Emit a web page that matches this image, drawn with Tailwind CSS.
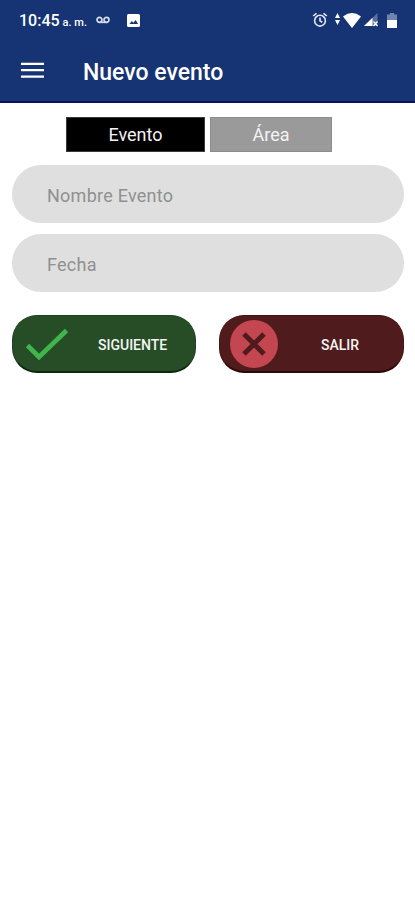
<!DOCTYPE html>
<html lang="es">

    <head>
        <meta charset="UTF-8">
        <meta name="viewport" content="width=device-width, initial-scale=1.0">
        <title>Nuevo evento</title>
        <script src="https://cdn.jsdelivr.net/npm/@tailwindcss/browser@4"></script>
    </head>

    <body class="min-h-screen bg-white font-[Roboto,sans-serif]">
        <header class="h-[103px] bg-[#163374] border-b-2 border-[#0b1160] text-white">
            <!-- Status bar -->
            <div class="flex h-10 items-center justify-between pl-[19px] pr-[18px]">
                <div class="flex items-center">
                    <span class="pt-[2px] text-[16px] font-medium leading-5">10:45</span>
                    <span class="ml-[3px] pt-[5px] text-[11px] font-medium leading-4 whitespace-nowrap">a. m.</span>
                    <svg class="ml-[9px] h-2 w-[14px]" viewBox="0 0 14 8" fill="none" stroke="#d5dbea" stroke-width="1.7">
                        <circle cx="3.5" cy="3.8" r="2.5" />
                        <circle cx="10.5" cy="3.8" r="2.5" />
                        <path d="M3.5 6.3h7" />
                    </svg>
                    <svg class="ml-[17px] h-[13px] w-[13px]" viewBox="0 0 13 13">
                        <rect width="13" height="13" rx="1.5" fill="#fff" />
                        <path d="M2.5 10l2.3-3 1.6 1.8L8.7 6l2.3 4z" fill="#163374" />
                    </svg>
                </div>
                <div class="flex items-center">
                    <svg class="h-4 w-4" viewBox="0 0 16 16" fill="none" stroke="#e5e9f3" stroke-width="1.6">
                        <circle cx="8" cy="8.7" r="5.4" />
                        <path d="M1.2 4L4.5 1.3M14.8 4l-3.3-2.7M8 5.5v3.4l2.3 1.4" />
                    </svg>
                    <svg class="ml-[7px] mb-[2px] h-3 w-[5px]" viewBox="0 0 5 12" fill="#fff">
                        <path d="M2.5 0L5 5H0zM2.5 12L5 7H0z" />
                    </svg>
                    <svg class="ml-[3px] h-[15px] w-[18px]" viewBox="0 0 18 14" preserveAspectRatio="none" fill="#fff">
                        <path d="M0 3.200Q9-3 18 3.200L9 14z" />
                    </svg>
                    <svg class="ml-[3px] h-[14px] w-[15px]" viewBox="0 0 15 14">
                        <path d="M0 13L13.500 0v13z" fill="#5a70a0" />
                        <path d="M0 13L8.500 4.800V13z" fill="#fff" />
                        <path d="M9.500 8.500l4 4.500M13.500 8.500l-4 4.500" stroke="#fff" stroke-width="1.300" />
                    </svg>
                    <svg class="ml-2 h-[15px] w-[10px]" viewBox="0 0 10 15">
                        <path d="M3 0h4v1.500h3V7H0V1.500h3z" fill="#7184ae" />
                        <path d="M0 7h10v8H0z" fill="#fff" />
                    </svg>
                </div>
            </div>

            <!-- Toolbar -->
            <div class="flex h-[61px] items-center pb-[2px] pl-[21px]">
                <svg class="h-4 w-[23px]" viewBox="0 0 23 16" stroke="#fff" stroke-width="2.2">
                    <path d="M0 1.800h23M0 8.200h23M0 14.600h23" />
                </svg>
                <h1 class="ml-[39px] pt-[7px] text-[23px] font-medium leading-7">Nuevo evento</h1>
            </div>
        </header>

        <main class="pl-3 pr-[11px] pt-[14px]">
            <!-- Tabs -->
            <div class="flex gap-[5px] pl-[54px] text-[18px] leading-5 text-[#f3f3f3]">
                <button class="h-[35px] w-[139px] border border-[#3a3a3a] bg-black">Evento</button>
                <button class="h-[35px] w-[122px] border border-[#8c8c8c] bg-[#9a9a9a]">Área</button>
            </div>

            <!-- Form fields -->
            <div class="mt-[13px] flex flex-col gap-[11px]">
                <input type="text" placeholder="Nombre Evento"
                    class="h-[58px] w-full rounded-[29px] bg-[#dfdfdf] px-[35px] pt-[2px] text-[18px] tracking-[0.25px] placeholder-[#909090] focus:outline-none">
                <input type="text" placeholder="Fecha"
                    class="h-[58px] w-full rounded-[29px] bg-[#dfdfdf] px-[35px] pt-[2px] text-[18px] tracking-[0.25px] placeholder-[#909090] focus:outline-none">
            </div>

            <!-- Actions -->
            <div class="mt-[23px] flex gap-[23px] text-[14px] font-medium text-[#f5f5f5]">
                <button class="flex h-[58px] w-[184px] items-center rounded-[25px] border border-b-2 border-[#1c4420] border-b-[#0c270d] bg-[#264d26] pl-3">
                    <svg class="h-8 w-[44px] shrink-0" viewBox="0 0 44 32" fill="none" stroke="#40b54d" stroke-width="4.7">
                        <path d="M2.500 17.500L14 29L41.500 2.500" />
                    </svg>
                    <span class="ml-[29px] pt-[3px]">SIGUIENTE</span>
                </button>
                <button class="flex h-[58px] w-[185px] items-center rounded-[25px] border border-b-2 border-[#451315] border-b-[#2b080a] bg-[#501b1c] pl-[10px]">
                    <svg class="h-12 w-12 shrink-0" viewBox="0 0 48 48">
                        <circle cx="24" cy="24" r="24" fill="#c44651" />
                        <path d="M14 14l20 20M34 14L14 34" stroke="#501b1c" stroke-width="5" />
                    </svg>
                    <span class="ml-[43px] pt-[3px]">SALIR</span>
                </button>
            </div>
        </main>
    </body>

</html>
